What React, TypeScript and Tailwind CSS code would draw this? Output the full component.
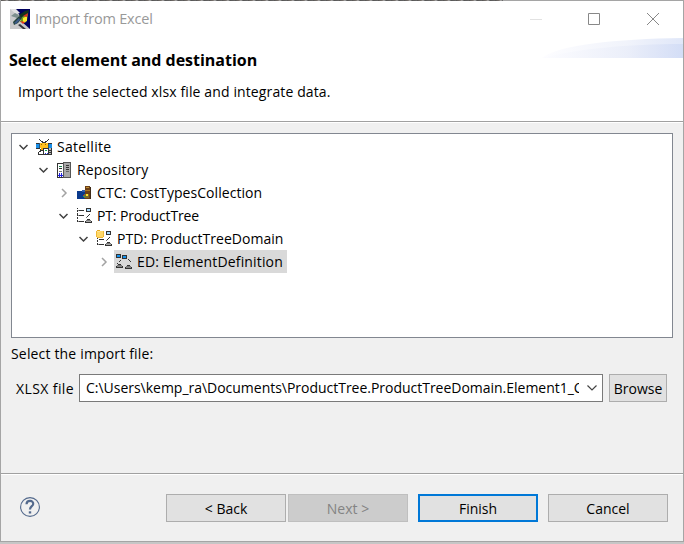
import type { ReactNode } from "react";

type Px = [number, number, number, number, string];

function PixelIcon({ px, label }: { px: Px[]; label: string }) {
  return (
    <svg width="16" height="16" viewBox="0 0 16 16" shapeRendering="crispEdges" aria-label={label} className="shrink-0 overflow-visible">
      {px.map(([x, y, w, h, fill], i) => (
        <rect key={i} x={x} y={y} width={w} height={h} fill={fill} />
      ))}
    </svg>
  );
}

const K = "#333333";

const SatelliteIcon = () => (
  <PixelIcon
    label="satellite"
    px={[
      [3, 0, 1, 1, K], [4, 1, 1, 1, K], [5, 2, 2, 1, K], [6, 3, 2, 1, K],
      [12, 0, 1, 1, K], [11, 1, 1, 1, K], [9, 2, 2, 1, K], [8, 3, 2, 1, K],
      [0, 4, 4, 6, K], [0, 4, 4, 5, "#1b8fe8"], [0, 4, 4, 1, K], [3, 4, 1, 5, "#24577f"],
      [4, 4, 8, 5, "#ffbf1f"], [5, 9, 3, 2, "#f5a800"],
      [12, 4, 4, 6, K], [12, 5, 4, 4, "#1b8fe8"], [12, 5, 1, 4, "#24577f"], [5, 5, 1, 1, "#996b00"], [9, 5, 1, 1, "#996b00"],
      [4, 10, 1, 2, K], [3, 12, 2, 1, K], [2, 13, 1, 3, K], [5, 11, 2, 1, K], [3, 15, 4, 1, K],
      [7, 9, 9, 7, K], [8, 10, 4, 5, "#ffffff"], [13, 9, 2, 6, "#bdbdbd"],
      [9, 11, 2, 1, "#18a558"], [9, 14, 1, 1, "#2638e8"], [11, 14, 1, 1, "#2638e8"], [13, 11, 2, 1, K], [13, 13, 2, 1, K],
    ]}
  />
);

const RepositoryIcon = () => (
  <PixelIcon
    label="repository"
    px={[
      [1, 1, 7, 15, K], [2, 2, 5, 13, "#ffffff"], [7, 0, 8, 16, "#555"], [8, 1, 6, 14, "#a8a8a8"],
      [3, 4, 3, 1, "#16834b"], [3, 6, 3, 1, K], [3, 9, 3, 1, "#777"],
      [3, 11, 1, 4, "#2020e0"], [5, 11, 1, 4, "#2020e0"], [2, 13, 5, 1, "#2020e0"],
      [10, 3, 3, 1, K], [10, 5, 3, 1, K], [10, 7, 3, 1, K], [10, 9, 3, 1, "#666"],
    ]}
  />
);

const CostIcon = () => (
  <PixelIcon
    label="cost types"
    px={[
      [1, 6, 9, 8, "#0a3a8c"], [6, 5, 3, 2, "#315fae"],
      [9, 1, 5, 13, "#6b3f17"], [10, 2, 3, 1, "#c29030"], [9, 5, 5, 1, "#a77425"], [14, 2, 1, 12, "#3e2a18"],
      [8, 9, 5, 4, "#7b6a2c"], [10, 9, 2, 2, "#ffe629"], [7, 10, 1, 1, "#bc2d2d"], [7, 11, 2, 1, "#1aa46a"],
    ]}
  />
);

const treeLines: Px[] = [
  [10, 0, 5, 4, K], [11, 1, 3, 2, "#a9dcff"],
  [13, 6, 1, 1, K], [12, 7, 1, 1, K], [11, 8, 1, 1, K], [10, 9, 1, 1, "#777"],
  [11, 11, 3, 1, K], [10, 12, 5, 1, "#777"], [9, 13, 7, 2, K], [10, 13, 5, 1, "#aaa"],
];

const ProductTreeIcon = () => (
  <PixelIcon
    label="product tree"
    px={[
      [1, 0, 1, 1, K], [1, 2, 1, 2, K], [1, 5, 1, 3, K], [1, 9, 1, 2, K], [1, 12, 1, 2, K],
      [2, 2, 1, 1, "#888"], [3, 2, 5, 1, K], [2, 7, 1, 1, "#888"], [3, 7, 5, 1, K], [2, 13, 1, 1, "#888"], [3, 13, 5, 1, K],
      ...treeLines,
    ]}
  />
);

const ProductTreeDomainIcon = () => (
  <PixelIcon
    label="product tree domain"
    px={[
      [1, 7, 1, 1, K], [1, 9, 1, 2, K], [1, 12, 1, 2, K], [3, 8, 5, 1, K], [2, 13, 1, 1, "#888"], [3, 13, 5, 1, K],
      ...treeLines,
      [1, -1, 3, 1, "#e9aa25"], [0, 0, 8, 6, "#efb735"], [1, 6, 6, 1, "#efb735"], [1, 0, 6, 6, "#ffd868"], [1, 0, 3, 1, "#ffe594"],
    ]}
  />
);

const ElementIcon = () => (
  <PixelIcon
    label="element definition"
    px={[
      [0, 0, 5, 4, K], [1, 1, 3, 2, "#1593ef"], [6, 1, 5, 4, K], [7, 2, 3, 2, "#1593ef"],
      [4, 6, 1, 1, K], [3, 7, 1, 1, K], [1, 9, 1, 1, K], [12, 5, 1, 1, K], [13, 6, 1, 1, K], [14, 7, 1, 1, K],
      [2, 10, 3, 1, K], [1, 11, 5, 1, "#777"], [0, 12, 7, 2, K], [1, 12, 5, 1, "#888"],
      [11, 11, 3, 1, K], [10, 12, 5, 1, "#777"], [9, 13, 7, 2, K], [10, 13, 5, 1, "#888"],
    ]}
  />
);

function Chevron({ open }: { open: boolean }) {
  return (
    <svg width="10" height="10" viewBox="0 0 10 10" fill="none" className="shrink-0">
      {open ? <path d="M0.5 3L4.5 7L8.5 3" stroke="#404040" strokeWidth="1.5" /> : <path d="M3 1L7 5L3 9" stroke="#a3a3a3" strokeWidth="1.5" />}
    </svg>
  );
}

function TreeRow({ indent, open, icon, text, track, selected }: { indent: string; open: boolean; icon: ReactNode; text: string; track: string; selected?: boolean }) {
  return (
    <div className={`flex h-[23px] items-center ${indent}`}>
      <Chevron open={open} />
      <div className={`ml-[5px] flex h-[23px] items-center gap-[5px] pl-[2px] pr-[4px] ${selected ? "bg-[#d9d9d9]" : ""}`}>
        {icon}
        <span className={`whitespace-nowrap ${track}`}>{text}</span>
      </div>
    </div>
  );
}

function Button({ look, children }: { look: string; children: ReactNode }) {
  return <button className={`flex h-7 w-[120px] items-center justify-center pt-px ${look}`}>{children}</button>;
}

export default function App() {
  return (
    <div className="h-[544px] w-[684px] overflow-hidden bg-[#c6c6c6] font-['Open_Sans','Noto_Sans',sans-serif] text-[14px] leading-[20px] text-black">
      <div className="flex h-[542px] flex-col border border-[#a5a5a5] bg-[#f0f0f0]">
        <header className="relative h-[120px] shrink-0 bg-white">
          <div className="absolute -top-px left-0 h-px w-[502px] bg-[repeating-linear-gradient(90deg,#555_0px,#77706b_4px,#aaa_6px,#555_8px,#666_13px)]" />
          <div className="flex h-9 items-center pl-[9px] text-[#999999]">
            <svg width="20" height="20" viewBox="0 0 20 20" className="shrink-0">
              <path d="M0 0H20V20H0Z" fill="#00005e" />
              <path d="M0 0H2L9 5L12 13L20 20H0Z" fill="#c9c9cb" />
              <path d="M0 0H6L10 4L6 5Z" fill="#e2e2e2" />
              <path d="M1 7L5 4L9 6L7 9Z" fill="#7d8f8d" />
              <path d="M3 13L9 7L13 8L8 14L4 16Z" fill="#23423b" />
              <path d="M4 14L9 9L10 11L6 15Z" fill="#3c5a8a" />
              <path d="M9 6L15 2L19 1L18 6L12 9Z" fill="#12331d" />
              <path d="M12 8L18 5L17 11L15 14L10 13Z" fill="#6c9e24" />
              <path d="M13 9L17 7L17 12L13 14Z" fill="#ffed28" />
              <path d="M13 7L18 4L17 8Z" fill="#dc2b21" />
              <path d="M10 12L15 13L13 15Z" fill="#eb301f" />
              <path d="M10 15L16 20H13L8 16Z" fill="#33343a" />
            </svg>
            <span className="ml-[5px] text-[14.5px] tracking-[-0.2px]">Import from Excel</span>
            <svg width="130" height="14" viewBox="0 0 130 14" fill="none" className="ml-auto mr-[23px]">
              <path d="M0 7.5H12" stroke="#e2e2e2" />
              <path d="M58.5 1.5H69.5V12.5H58.5Z" stroke="#888" />
              <path d="M117 1L129 13M129 1L117 13" stroke="#888" />
            </svg>
          </div>
          <h1 className="mt-[13px] pl-2 text-[16px] font-bold leading-[20px] tracking-[-0.02px]">Select element and destination</h1>
          <p className="mt-[12px] pl-[17px] tracking-[0.12px]">Import the selected xlsx file and integrate data.</p>
          <svg width="141" height="20" viewBox="0 0 141 20" className="absolute right-0 top-[37px]">
            <defs>
              <linearGradient id="swoosh">
                <stop stopColor="#fcfcff" />
                <stop offset="0.6" stopColor="#e9edf9" />
                <stop offset="1" stopColor="#cfdaf5" />
              </linearGradient>
            </defs>
            <path d="M0 20C15 7 74 1 141 0V20Z" fill="url(#swoosh)" opacity="0.65" />
            <path d="M0 20C36 11 84 6 141 6V20Z" fill="url(#swoosh)" opacity="0.75" />
          </svg>
        </header>
        <div className="h-[2px] shrink-0 border-t border-[#a0a0a0] bg-white" />
        <main className="h-[350px] shrink-0 px-[10px] pt-[10px]">
          <div className="h-[205px] w-[662px] border border-[#828790] bg-white pt-px">
            <TreeRow indent="pl-[7px]" open icon={<SatelliteIcon />} text="Satellite" track="tracking-[0.3px]" />
            <TreeRow indent="pl-[27px]" open icon={<RepositoryIcon />} text="Repository" track="tracking-[0.15px]" />
            <TreeRow indent="pl-[47px]" open={false} icon={<CostIcon />} text="CTC: CostTypesCollection" track="tracking-[0.06px]" />
            <TreeRow indent="pl-[47px]" open icon={<ProductTreeIcon />} text="PT: ProductTree" track="tracking-[-0.13px]" />
            <TreeRow indent="pl-[67px]" open icon={<ProductTreeDomainIcon />} text="PTD: ProductTreeDomain" track="tracking-[0.04px]" />
            <TreeRow indent="pl-[87px]" open={false} icon={<ElementIcon />} text="ED: ElementDefinition" track="tracking-[0.15px]" selected />
          </div>
          <p className="mt-[6px] tracking-[0.17px]">Select the import file:</p>
          <div className="mt-[10px] flex h-7 items-center">
            <span className="w-[68px] whitespace-nowrap pl-[5px] pt-px tracking-[0.4px]">XLSX file</span>
            <div className="flex h-7 w-[524px] items-center border border-[#7a7a7a] bg-white pl-[6px] pr-1">
              <span className="mr-auto w-[493px] overflow-hidden whitespace-nowrap tracking-[-0.02px]">C:\Users\kemp_ra\Documents\ProductTree.ProductTreeDomain.Element1_C</span>
              <svg width="12" height="8" viewBox="0 0 12 8" fill="none"><path d="M1.5 1.5L6 6L10.5 1.5" stroke="#444" strokeWidth="1.2" /></svg>
            </div>
            <button className="ml-[6px] h-7 w-[58px] border border-[#adadad] bg-[#e1e1e1] pt-px">Browse</button>
          </div>
        </main>
        <div className="h-[2px] shrink-0 border-t border-[#a0a0a0] bg-white" />
        <footer className="flex h-[67px] items-center pl-[19px]">
          <svg width="20" height="20" viewBox="0 0 20 20" fill="none" className="mb-[2px]">
            <circle cx="10" cy="10" r="9.4" stroke="#53698c" strokeWidth="1.1" />
            <path d="M6.5 7.2C6.7 2.7 13.7 3 13.2 7C13 9.3 10 9.2 10 12.5" stroke="#53698c" strokeWidth="2.2" />
            <path d="M8.8 14.3H11.2V16.5H8.8Z" fill="#53698c" />
          </svg>
          <div className="ml-[126px] flex">
            <Button look="border border-[#adadad] bg-[#e1e1e1]">&lt; Back</Button>
            <Button look="ml-[2px] border border-[#bfbfbf] bg-[#cccccc] text-[#838383]">Next &gt;</Button>
            <Button look="ml-[10px] border-2 border-[#0078d7] bg-[#e1e1e1]">Finish</Button>
            <Button look="ml-[10px] border border-[#adadad] bg-[#e1e1e1]">Cancel</Button>
          </div>
        </footer>
      </div>
    </div>
  );
}
